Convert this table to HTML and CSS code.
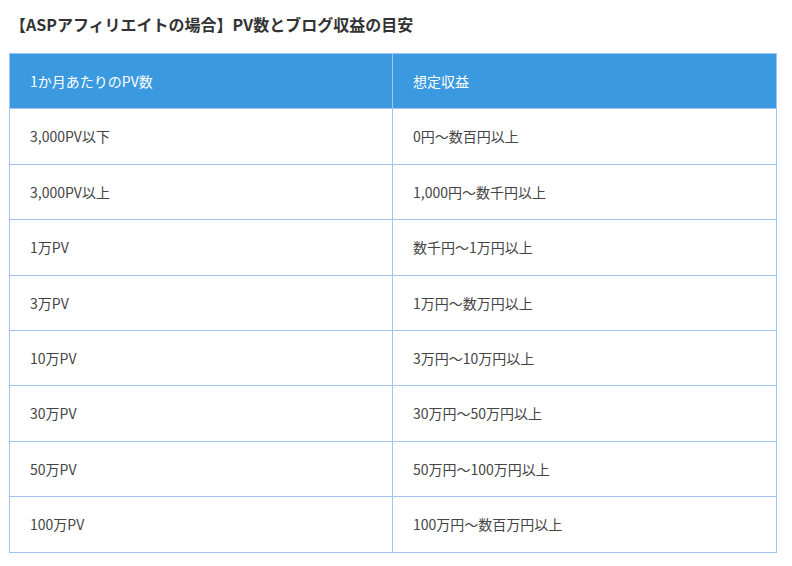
FILE: index.html
```html
<!DOCTYPE html>
<html lang="ja">
<head>
<meta charset="utf-8">
<link rel="stylesheet" href="styles.css">
</head>
<body>
<div class="wrap">
  <h3 class="title">【ASPアフィリエイトの場合】PV数とブログ収益の目安</h3>
  <table class="tbl">
    <thead>
      <tr><th class="c1">1か月あたりのPV数</th><th>想定収益</th></tr>
    </thead>
    <tbody>
      <tr><td>3,000PV以下</td><td>0円〜数百円以上</td></tr>
      <tr><td>3,000PV以上</td><td>1,000円〜数千円以上</td></tr>
      <tr><td>1万PV</td><td>数千円〜1万円以上</td></tr>
      <tr><td>3万PV</td><td>1万円〜数万円以上</td></tr>
      <tr><td>10万PV</td><td>3万円〜10万円以上</td></tr>
      <tr><td>30万PV</td><td>30万円〜50万円以上</td></tr>
      <tr><td>50万PV</td><td>50万円〜100万円以上</td></tr>
      <tr><td>100万PV</td><td>100万円〜数百万円以上</td></tr>
    </tbody>
  </table>
</div>
</body>
</html>
```
FILE: styles.css
```css
html, body {
  margin: 0;
  padding: 0;
  background: #fff;
}
body {
  font-family: "Noto Sans CJK JP", "Noto Sans", sans-serif;
  color: #444;
}
.wrap {
  padding: 12px 15px 0 9px;
}
.title {
  margin: 0 0 16px 1px;
  font-size: 16px;
  font-weight: bold;
  line-height: 25px;
  color: #333;
}
.tbl {
  width: 768px;
  border-collapse: collapse;
  table-layout: fixed;
}
.tbl th, .tbl td {
  border: 1px solid #a3c3ef;
  text-align: left;
  font-size: 14px;
  line-height: 24.4px;
  padding: 15px 20px 15px 20px;
}
.tbl th {
  background: #3a99df;
  color: #fff;
  font-weight: normal;
}
.tbl .c1 {
  width: 342px;
}
.tbl td {
  color: #444;
}
```
